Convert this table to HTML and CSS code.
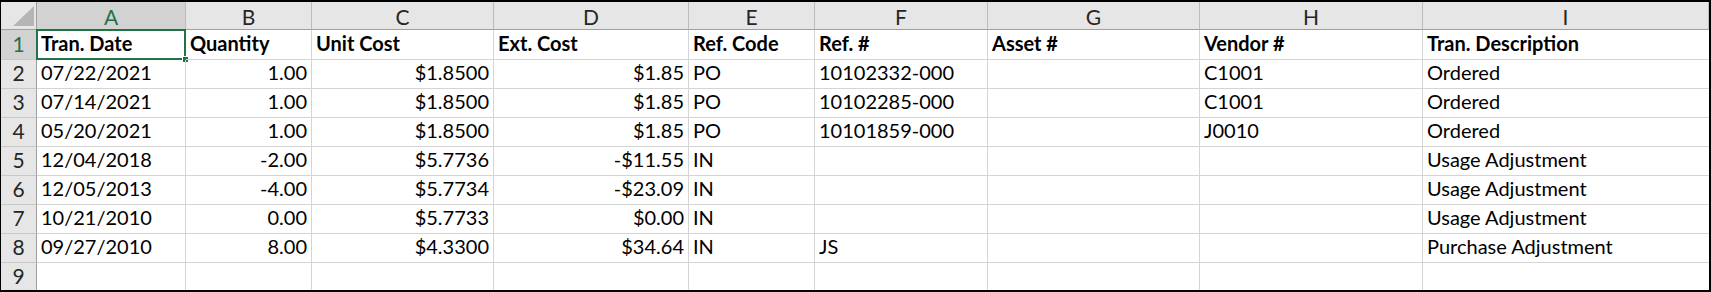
FILE: index.html
```html
<!DOCTYPE html>
<html>
<head>
<meta charset="utf-8">
<link rel="stylesheet" href="styles.css">
</head>
<body>
<div class="sheet">
  <div class="corner"><span class="tri"></span></div>
  <div class="ch sel">A</div>
  <div class="ch">B</div>
  <div class="ch">C</div>
  <div class="ch">D</div>
  <div class="ch">E</div>
  <div class="ch">F</div>
  <div class="ch">G</div>
  <div class="ch">H</div>
  <div class="ch">I</div>

  <div class="rh sel">1</div>
  <div class="c b active">Tran. Date<span class="selbox"><span class="handle"></span></span></div>
  <div class="c b">Quantity</div>
  <div class="c b">Unit Cost</div>
  <div class="c b">Ext. Cost</div>
  <div class="c b">Ref. Code</div>
  <div class="c b">Ref. #</div>
  <div class="c b">Asset #</div>
  <div class="c b">Vendor #</div>
  <div class="c b">Tran. Description</div>

  <div class="rh">2</div>
  <div class="c">07/22/2021</div>
  <div class="c r">1.00</div>
  <div class="c r">$1.8500</div>
  <div class="c r">$1.85</div>
  <div class="c">PO</div>
  <div class="c">10102332-000</div>
  <div class="c"></div>
  <div class="c">C1001</div>
  <div class="c">Ordered</div>

  <div class="rh">3</div>
  <div class="c">07/14/2021</div>
  <div class="c r">1.00</div>
  <div class="c r">$1.8500</div>
  <div class="c r">$1.85</div>
  <div class="c">PO</div>
  <div class="c">10102285-000</div>
  <div class="c"></div>
  <div class="c">C1001</div>
  <div class="c">Ordered</div>

  <div class="rh">4</div>
  <div class="c">05/20/2021</div>
  <div class="c r">1.00</div>
  <div class="c r">$1.8500</div>
  <div class="c r">$1.85</div>
  <div class="c">PO</div>
  <div class="c">10101859-000</div>
  <div class="c"></div>
  <div class="c">J0010</div>
  <div class="c">Ordered</div>

  <div class="rh">5</div>
  <div class="c">12/04/2018</div>
  <div class="c r">-2.00</div>
  <div class="c r">$5.7736</div>
  <div class="c r">-$11.55</div>
  <div class="c">IN</div>
  <div class="c"></div>
  <div class="c"></div>
  <div class="c"></div>
  <div class="c">Usage Adjustment</div>

  <div class="rh">6</div>
  <div class="c">12/05/2013</div>
  <div class="c r">-4.00</div>
  <div class="c r">$5.7734</div>
  <div class="c r">-$23.09</div>
  <div class="c">IN</div>
  <div class="c"></div>
  <div class="c"></div>
  <div class="c"></div>
  <div class="c">Usage Adjustment</div>

  <div class="rh">7</div>
  <div class="c">10/21/2010</div>
  <div class="c r">0.00</div>
  <div class="c r">$5.7733</div>
  <div class="c r">$0.00</div>
  <div class="c">IN</div>
  <div class="c"></div>
  <div class="c"></div>
  <div class="c"></div>
  <div class="c">Usage Adjustment</div>

  <div class="rh">8</div>
  <div class="c">09/27/2010</div>
  <div class="c r">8.00</div>
  <div class="c r">$4.3300</div>
  <div class="c r">$34.64</div>
  <div class="c">IN</div>
  <div class="c">JS</div>
  <div class="c"></div>
  <div class="c"></div>
  <div class="c">Purchase Adjustment</div>

  <div class="rh last">9</div>
  <div class="c last"></div>
  <div class="c last"></div>
  <div class="c last"></div>
  <div class="c last"></div>
  <div class="c last"></div>
  <div class="c last"></div>
  <div class="c last"></div>
  <div class="c last"></div>
  <div class="c last"></div>
</div>
</body>
</html>
```

FILE: styles.css
```css
html, body {
  margin: 0;
  padding: 0;
  background: #ffffff;
}

.sheet {
  width: 1711px;
  height: 292px;
  box-sizing: border-box;
  border-top: 2px solid #000;
  border-right: 2px solid #000;
  border-bottom: 2px solid #000;
  border-left: 1px solid #000;
  display: grid;
  grid-template-columns: 36px 149px 126px 182px 195px 126px 173px 212px 223px 286px;
  grid-template-rows: 28px 30px repeat(7, 29px) 1fr;
  font-family: "Lato", "Liberation Sans", sans-serif;
  font-size: 20px;
  color: #000;
  overflow: hidden;
}

.corner {
  background: #e6e6e6;
  border-right: 1px solid #9f9f9f;
  border-bottom: 1px solid #9f9f9f;
  position: relative;
}

.tri {
  position: absolute;
  right: 2px;
  bottom: 3px;
  width: 0;
  height: 0;
  border-left: 21px solid transparent;
  border-bottom: 20px solid #b5b5b5;
}

.ch {
  background: #e6e6e6;
  border-right: 1px solid #bcbcbc;
  border-bottom: 1px solid #9f9f9f;
  display: flex;
  align-items: center;
  justify-content: center;
  color: #262626;
  padding-top: 2px;
  box-sizing: border-box;
  font-size: 21px;
}

.ch.sel {
  background: #d2d2d2;
  color: #217346;
}

.rh {
  background: #e6e6e6;
  border-right: 1px solid #9f9f9f;
  border-bottom: 1px solid #c8c8c8;
  display: flex;
  align-items: flex-end;
  justify-content: center;
  padding-bottom: 3px;
  color: #262626;
  box-sizing: border-box;
  font-size: 21px;
}

.rh.sel {
  background: #d2d2d2;
  color: #217346;
}

.rh.last {
  border-bottom: none;
}

.c {
  border-right: 1px solid #d4d4d4;
  border-bottom: 1px solid #d4d4d4;
  display: flex;
  align-items: flex-end;
  padding: 0 4px 4px 4px;
  white-space: nowrap;
  box-sizing: border-box;
  position: relative;
}

.c.last {
  border-bottom: none;
}

.c:nth-child(10n) {
  border-right: none;
}

.c.r {
  justify-content: flex-end;
}

.c.b {
  font-weight: 700;
}

.selbox {
  position: absolute;
  left: -1px;
  top: -1px;
  right: -1px;
  bottom: -1px;
  border: 2px solid #217346;
}

.handle {
  position: absolute;
  right: -5px;
  bottom: -5px;
  width: 5px;
  height: 5px;
  background: #217346;
  border: 1px solid #fff;
}
```
